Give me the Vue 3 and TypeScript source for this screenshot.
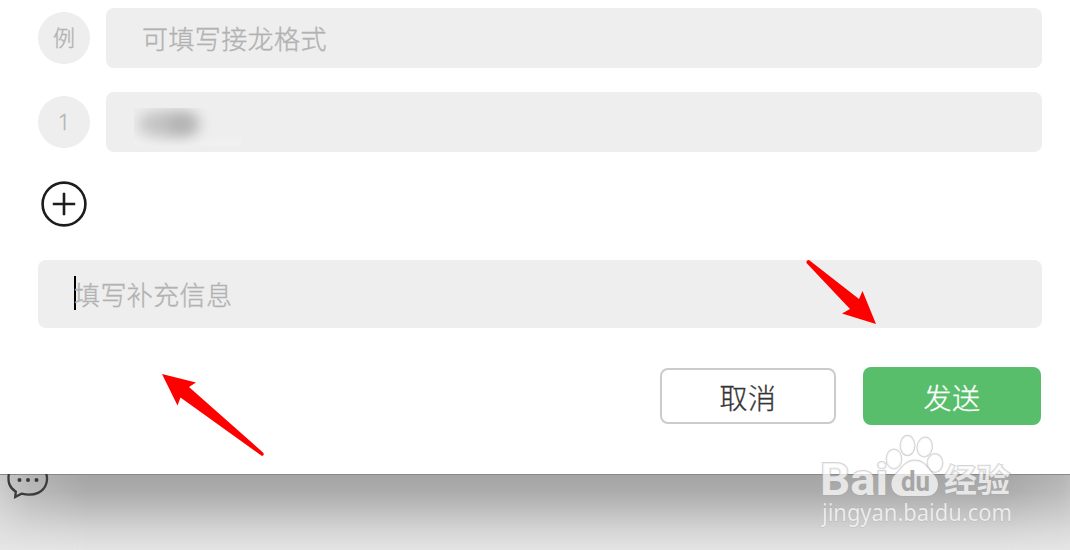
<script setup lang="ts">
import { ref } from 'vue'

interface Entry {
  badge: string
  placeholder: string
  masked: boolean
}

const entries = ref<Entry[]>([
  { badge: '例', placeholder: '可填写接龙格式', masked: false },
  { badge: '1', placeholder: '', masked: true },
])
</script>

<template>
  <div class="screen">
    <main class="dialog">
      <div v-for="entry in entries" :key="entry.badge" class="entry">
        <span class="badge">{{ entry.badge }}</span>
        <div class="field">
          <span v-if="entry.placeholder" class="hint">{{ entry.placeholder }}</span>
          <span v-if="entry.masked" class="mask"><i class="smudge left"></i><i class="smudge right"></i></span>
        </div>
      </div>

      <svg class="add" viewBox="0 0 46 46" aria-label="add">
        <circle cx="23" cy="23" r="21.4" />
        <path d="M11.8 23H34.2M23 11.8V34.2" />
      </svg>

      <div class="note"><span class="caret"></span><span class="hint">填写补充信息</span></div>

      <div class="actions">
        <button class="btn cancel">取消</button>
        <button class="btn send">发送</button>
      </div>
    </main>

    <footer class="backdrop">
      <div class="shade"></div>
      <svg class="chat" viewBox="0 0 50 30">
        <path d="M10.3 -3C7.8 0 8.3 7 9.3 10C10.5 13.3 13 16 15.8 17.7L15.2 23L21.5 19.7C35 23 44 17.500 46.300 9.500C47.500 5 47 0 44.500 -3" />
        <circle cx="19.500" cy="6" r="2" /><circle cx="28" cy="6" r="2" /><circle cx="36.500" cy="6" r="2" />
      </svg>
    </footer>

    <svg class="overlay" viewBox="0 0 1070 550">
      <path class="arrow" d="M162 374L196 382.500L189 387L263 452.500Q265 455 262 456L180.500 397.500L177.500 405.500Z" />
      <path class="arrow" d="M876 324L842 313.500L850 309L806.500 263Q806 260 809 260L859 299L862.500 291Z" />
      <g class="mark">
        <text x="820" y="495" class="logo" textLength="68" lengthAdjust="spacingAndGlyphs">Bai</text>
        <ellipse cx="894" cy="459" rx="7.400" ry="9.500" />
        <ellipse cx="907.500" cy="445.500" rx="7" ry="9.700" />
        <ellipse cx="924.700" cy="447" rx="7.300" ry="9.500" transform="rotate(8 924.700 447)" />
        <ellipse cx="935" cy="463" rx="7.500" ry="9" />
        <path d="M915 460.500C904 460.500 900 471 895 475C888.500 481 891 496 903 496H926C939 496 941 482 934 475C929 470 925 460.500 915 460.500Z" />
        <text x="901" y="491" class="du" textLength="29" lengthAdjust="spacingAndGlyphs">du</text>
        <text x="944" y="492" class="cn" textLength="66" lengthAdjust="spacingAndGlyphs">经验</text>
        <text x="822" y="520.500" class="site" textLength="190" lengthAdjust="spacingAndGlyphs">jingyan.baidu.com</text>
      </g>
    </svg>
  </div>
</template>

<style>
body { margin: 0; overflow: hidden; }
</style>

<style scoped>
.screen {
  position: relative;
  width: 1070px;
  height: 550px;
  overflow: hidden;
  background: #fff;
  font-family: "Noto Sans CJK SC", sans-serif;
}
.dialog {
  box-sizing: border-box;
  height: 474px;
  padding: 8px 28px 0 38px;
  background: #fff;
}
.entry {
  display: flex;
  align-items: center;
  gap: 16px;
  height: 60px;
  margin-bottom: 24px;
}
.badge {
  width: 52px;
  height: 52px;
  border-radius: 50%;
  background: #eee;
  color: #b2b2b2;
  font-family: "Open Sans", "Noto Sans CJK SC", sans-serif;
  font-size: 22px;
  font-weight: 300;
  line-height: 51px;
  text-align: center;
  -webkit-text-stroke: .35px #b2b2b2;
}
.field {
  flex: 1;
  display: flex;
  align-items: center;
  height: 60px;
  box-sizing: border-box;
  padding-left: 36px;
  border-radius: 8px;
  background: #eee;
}
.hint {
  color: #b2b2b2;
  font-size: 26px;
  font-weight: 300;
  line-height: 38px;
  letter-spacing: .4px;
  white-space: nowrap;
  -webkit-text-stroke: .35px #b2b2b2;
}
.mask {
  position: relative;
  width: 108px;
  height: 38px;
  margin: 10px 0 0 -8px;
  overflow: hidden;
  background: linear-gradient(#eee 70%, #f1f1f1);
}
.smudge {
  position: absolute;
  border-radius: 40%;
  filter: blur(7px);
}
.smudge.left { left: 5px; top: 3px; width: 60px; height: 26px; background: #c3c3c3; }
.smudge.right { left: 34px; top: 8px; width: 27px; height: 16px; background: #b0b0b0; }
.add {
  display: block;
  width: 46px;
  height: 46px;
  margin: 29px 0 0 3px;
  fill: none;
  stroke: #1c1c1c;
  stroke-width: 2.6;
}
.note {
  display: flex;
  align-items: center;
  height: 68px;
  box-sizing: border-box;
  margin-top: 33px;
  padding-left: 36px;
  border-radius: 8px;
  background: #eee;
}
.caret {
  width: 2px;
  height: 34px;
  margin: 0 -2px 2px 0;
  background: #000;
}
.actions {
  display: flex;
  align-items: center;
  justify-content: flex-end;
  gap: 27px;
  height: 58px;
  margin: 39px 1px 0 0;
}
.btn {
  box-sizing: border-box;
  padding: 1px 0 0;
  border-radius: 8px;
  font-family: inherit;
  font-size: 28px;
  font-weight: 300;
  line-height: 40px;
  letter-spacing: .4px;
  -webkit-text-stroke: .3px currentColor;
}
.cancel {
  width: 176px;
  height: 56px;
  border: 2px solid #ccc;
  background: #fff;
  color: #353535;
}
.send {
  width: 178px;
  height: 58px;
  border: 0;
  background: #58be6b;
  color: #fff;
}
.backdrop {
  position: relative;
  height: 76px;
  box-sizing: border-box;
  border-top: 1px solid #888;
  background: linear-gradient(#cfcfcf, #e7e7e7);
}
.shade {
  height: 75px;
  background: linear-gradient(#a5a5a5, #acacac 22%, #c0c0c0 48%, #d6d6d6 75%, #e4e4e4);
  mask-image: linear-gradient(90deg, transparent -10px, rgba(0, 0, 0, .65) 30px, #000 85px, #000 1005px, rgba(0, 0, 0, .65) 1060px, transparent 1100px);
}
.chat {
  position: absolute;
  left: 0;
  top: -1px;
  width: 50px;
  height: 30px;
  fill: none;
  stroke: #3b3b3b;
  stroke-width: 2.3;
}
.chat circle { fill: #3b3b3b; stroke: none; }
.overlay {
  position: absolute;
  inset: 0;
  width: 1070px;
  height: 550px;
  pointer-events: none;
}
.arrow { fill: #f00; }
.mark {
  fill: rgba(255, 255, 255, .72);
  stroke: rgba(170, 170, 170, .5);
  stroke-width: 2;
  paint-order: stroke;
}
.logo { font: 700 44px Roboto, sans-serif; }
.du { font: 700 27px Roboto, sans-serif; fill: #a6a6a6; stroke: none; }
.cn { font: 700 32px "Noto Sans CJK SC", sans-serif; }
.site { font: 400 23px "Noto Sans", sans-serif; stroke-width: 1; }
</style>
